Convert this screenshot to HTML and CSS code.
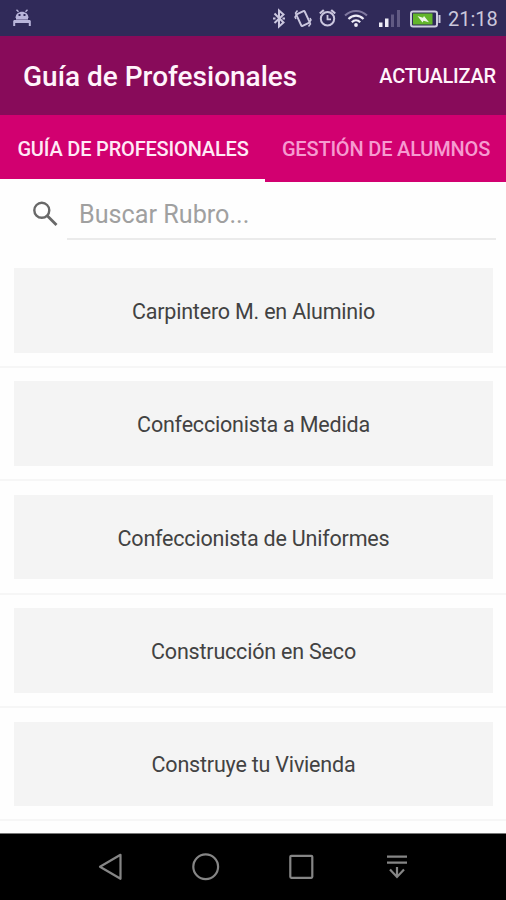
FILE: index.html
```html
<!DOCTYPE html>
<html lang="es">
<head>
<meta charset="utf-8">
<title>Guía de Profesionales</title>
<link rel="stylesheet" href="styles.css">
</head>
<body>
<div class="screen">
  <header class="status">
    <svg class="debug" width="20" height="18" viewBox="0 0 20 18" fill="none" stroke="#b9b5da" stroke-width="1.6">
      <path d="M4.500 .8l2 2M15.500 .8l-2 2" stroke-width="1.400"/>
      <path d="M3.500 9c0-8.500 13-8.500 13 0z" fill="#b9b5da" stroke="none"/>
      <path d="M6.500 6h2M11.500 6h2" stroke="#302a59" stroke-width="2"/>
      <path d="M2.200 17v-5.500M17.800 17v-5.500" stroke-width="2"/>
      <path d="M2 12.500h16" stroke-width="3"/>
      <path d="M4 9.800h12"/>
    </svg>
    <svg class="tray" width="174" height="36" viewBox="0 0 174 36" fill="none" stroke="#cbc7df" stroke-width="1.800">
      <path d="M2.500 13.500l9 9-4.500 4V10.500l4.500 4-9 8.500M1 18.500h2.500M10.500 18.500h2.500" stroke-width="2"/>
      <rect x="26.500" y="12" width="9" height="13" rx="1" transform="rotate(-25 31 18.500)" stroke-width="2"/>
      <path d="M25.500 10.500l-2 2.500 1 2-1.500 2 1 2M36.500 26.500l2-2.500-1-2 1.500-2-1-2" stroke-width="1.500"/>
      <circle cx="55.500" cy="18.800" r="6.700" stroke-width="2"/>
      <path d="M55.500 15v4.300h3.500"/>
      <path d="M47.800 13.500l4-3.500M59.200 10l4 3.500" stroke-width="2.200"/>
      <path d="M73 15.500c6.300-6 15.700-6 22 0" stroke="#7f789f" stroke-width="2"/>
      <path d="M76.500 19c4.500-4.500 10.500-4.500 15 0M79.800 22.300c2.500-2.500 5.900-2.500 8.400 0" stroke="#eeecf7" stroke-width="2.200"/>
      <circle cx="84" cy="25" r="1.900" fill="#eeecf7" stroke="none"/>
      <path d="M107 22.500h3.500v4.500h-3.500zM113 18.500h3.500V27H113z" fill="#eeecf7" stroke="none"/>
      <path d="M119 14.500h3V27h-3zM125 10h3v17h-3z" fill="#615a83" stroke="none"/>
      <rect x="139" y="11.500" width="26" height="15" rx="2" stroke="#cfcde0" stroke-width="2"/>
      <path d="M141 13.500h19.500v11H141z" fill="#63b52b" stroke="none"/>
      <path d="M167.500 15v8" stroke-width="2"/>
      <path d="M145.500 16l5.500 1.800 1-1.800 5 6.300-5.500-1.500-1 1.700z" fill="#eff7e9" stroke="none"/>
    </svg>
    <span class="clock">21:18</span>
  </header>
  <div class="toolbar">
    <h1 class="title"><span>Guía de Profesionales</span></h1>
    <span class="action">ACTUALIZAR</span>
  </div>
  <nav class="tabs">
    <div class="tab active"><span>GUÍA DE PROFESIONALES</span></div>
    <div class="tab"><span>GESTIÓN DE ALUMNOS</span></div>
  </nav>
  <div class="search">
    <svg width="26" height="26" viewBox="0 0 26 26" fill="none" stroke="#686868" stroke-width="2.400"><circle cx="9.800" cy="9.300" r="7.500"/><path d="M15 14.500l9.500 9.500" stroke-width="2.800"/></svg>
    <div class="field"><span>Buscar Rubro...</span></div>
  </div>
  <main class="list">
    <div class="row"><div class="item"><span>Carpintero M. en Aluminio</span></div></div>
    <div class="row"><div class="item"><span>Confeccionista a Medida</span></div></div>
    <div class="row"><div class="item"><span>Confeccionista de Uniformes</span></div></div>
    <div class="row"><div class="item"><span>Construcción en Seco</span></div></div>
    <div class="row"><div class="item"><span>Construye tu Vivienda</span></div></div>
  </main>
  <footer class="navbar">
    <svg width="506" height="66" viewBox="0 0 506 66" fill="none" stroke="#858585" stroke-width="2.200" stroke-linejoin="round">
      <path d="M100 32.800l20.500-12v24z"/>
      <circle cx="205.700" cy="32.800" r="12.400"/>
      <rect x="290.300" y="21.800" width="22" height="22" rx="1"/>
      <path d="M387 22.700h20M387 28.700h20M397 33v10.500M390 35.500l7 7.500 7-7.500" stroke-linejoin="miter"/>
    </svg>
  </footer>
</div>
</body>
</html>
```
FILE: styles.css
```css
* { box-sizing: border-box; }
body { margin: 0; font-family: Roboto, "Liberation Sans", sans-serif; background: #fff; }
svg { display: block; flex: none; }
.screen { width: 506px; height: 900px; display: flex; flex-direction: column; overflow: hidden; background: #fefefe; }
.status { height: 36px; flex: none; display: flex; align-items: center; padding: 0 8px 0 12px; background: #302a59; }
.tray { margin-left: auto; margin-right: 2px; }
.clock { width: 50px; flex: none; color: #cbc8dc; font-size: 20px; line-height: 36px; padding-top: 2px; white-space: nowrap; }
.toolbar { height: 78.500px; flex: none; display: flex; align-items: center; justify-content: space-between; padding: 0 10px 0 23px; background: #880b5a; color: #fff4fb; white-space: nowrap; }
.title { margin: 0; padding-top: 3px; font-size: 28px; font-weight: 500; line-height: 36px; }
.action { padding-top: 2px; font-size: 20px; letter-spacing: -0.200px; font-weight: 500; line-height: 28px; }
.tabs { height: 67px; flex: none; display: flex; background: #d20070; }
.tab { flex: 1; display: flex; align-items: center; justify-content: center; padding: 2px 0 0 1px; color: #f69bd0; font-size: 20px; letter-spacing: -0.180px; font-weight: 500; white-space: nowrap; }
.tab.active { flex: 0 0 265px; color: #ffe9f6; border-bottom: 3px solid #fefefe; padding-top: 5px; }
.search { height: 58px; flex: none; display: flex; align-items: flex-start; padding: 0 10px 0 32px; }
.search svg { margin-top: 19px; }
.field { flex: 1; height: 58px; margin-left: 9px; padding: 18px 0 0 12px; border-bottom: 2px solid #ebebeb; color: #a0a0a0; font-size: 25.200px; line-height: 30px; white-space: nowrap; }
.list { flex: 1; overflow: hidden; padding-top: 15px; }
.row { height: 113.400px; padding: 13.500px 13px 0 14px; border-bottom: 2px solid #f6f6f6; }
.item { height: 84.500px; display: flex; align-items: center; justify-content: center; padding: 2px 0 0; background: #f4f4f4; color: #424242; font-size: 21.500px; letter-spacing: -0.200px; white-space: nowrap; }
.navbar { height: 67px; flex: none; background: #000; border-top: 1px solid #777; }
```
